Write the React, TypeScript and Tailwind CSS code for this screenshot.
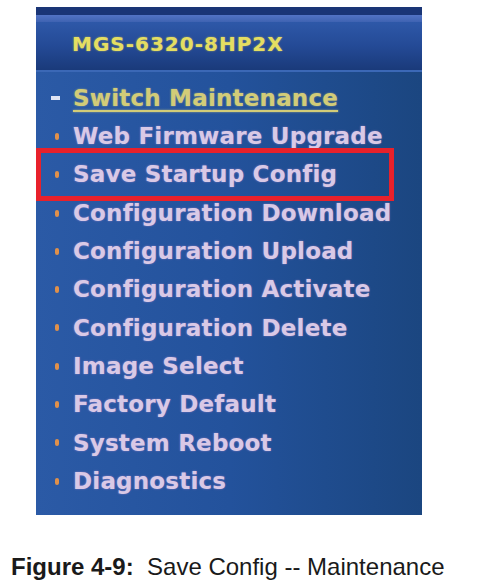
import React from 'react';

const items = [
  'Web Firmware Upgrade',
  'Save Startup Config',
  'Configuration Download',
  'Configuration Upload',
  'Configuration Activate',
  'Configuration Delete',
  'Image Select',
  'Factory Default',
  'System Reboot',
  'Diagnostics',
];

const MenuRow: React.FC<{ label: string }> = ({ label }) => (
  <div className="h-[38.3px] flex items-center">
    <span className="w-[21px] flex justify-end pr-[14px]">
      <span className="w-[4px] h-[7px] rounded-full bg-[#e0904a]"></span>
    </span>
    <span className="text-[23px] font-bold text-[#d9c9e6] tracking-[0.2px] [text-shadow:0_0_2px_rgba(200,150,220,0.6)]">
      {label}
    </span>
  </div>
);

export default function App() {
  return (
    <div className="w-[478px] h-[586px] bg-white flex flex-col" style={{ fontFamily: '"DejaVu Sans", Verdana, sans-serif' }}>
      <div className="relative ml-[36px] mt-[7px] w-[386px] h-[508px] bg-gradient-to-r from-[#2b5aa6] via-[#23529c] to-[#1b4680] flex flex-col">
        {/* header band */}
        <div className="h-[63px] flex flex-col">
          <div className="h-[8px] bg-[#1a3576]"></div>
          <div className="h-[7px] bg-gradient-to-b from-[#5273c4] to-[#3f63b2]"></div>
          <div className="flex-1 bg-gradient-to-b from-[#2e58a8] via-[#244a96] to-[#1a3a7a] flex items-center pl-[36px]">
            <span className="text-[20px] font-bold text-[#e4de62] tracking-[1px] [text-shadow:0_0_2px_rgba(240,220,80,0.6)] -mt-[5px]">
              MGS-6320-8HP2X
            </span>
          </div>
        </div>
        <div className="h-[2px] bg-[#3b68b6]"></div>
        {/* menu */}
        <div className="flex flex-col pt-[7px]">
          <div className="h-[38.3px] flex items-center">
            <span className="w-[37px] flex justify-start pl-[15px]">
              <span className="w-[9px] h-[4px] bg-[#dfe4f4]"></span>
            </span>
            <span className="text-[23px] font-bold text-[#d2cc78] underline underline-offset-[4px] decoration-[2px] tracking-[0.2px] [text-shadow:0_0_2px_rgba(220,210,120,0.6)]">
              Switch Maintenance
            </span>
          </div>
          {items.map(label => (
            <div key={label} className="pl-[16px]">
              <MenuRow label={label} />
            </div>
          ))}
        </div>
        {/* highlight annotation */}
        <div className="absolute left-0 top-[141px] w-[358px] h-[53px] border-[5px] border-[#e8212b]"></div>
      </div>
      <div className="mt-[36px] pl-[11px] text-[24px] leading-[32px] text-[#1a1a1a] whitespace-pre" style={{ fontFamily: '"Liberation Sans", Arial, sans-serif' }}>
        <span className="font-bold">Figure 4-9:</span>
        <span>  Save Config -- Maintenance</span>
      </div>
    </div>
  );
}
